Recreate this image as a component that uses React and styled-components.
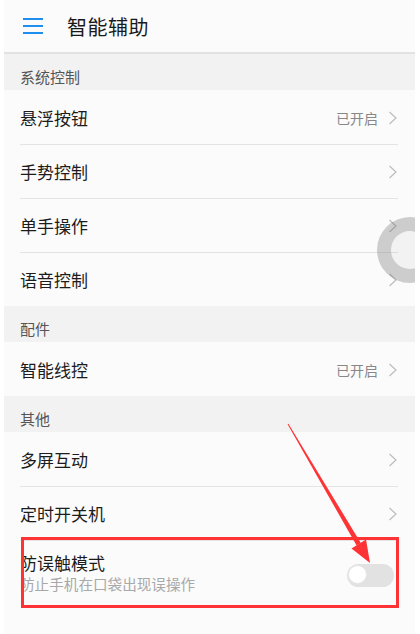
import React from "react";
import styled, { createGlobalStyle } from "styled-components";

const GlobalStyle = createGlobalStyle`
  html, body {
    margin: 0;
    padding: 0;
    background: #fff;
  }
  body {
    font-family: "Noto Sans CJK SC", "Noto Sans", sans-serif;
  }
`;

const Page = styled.div`
  position: relative;
  width: 420px;
  height: 634px;
  overflow: hidden;
  background: #fff;
`;

const Screen = styled.div`
  position: relative;
  margin-left: 4px;
  width: 411px;
  height: 634px;
  overflow: hidden;
  background: #fbfbfb;
`;

const Header = styled.header`
  display: flex;
  align-items: center;
  height: 52px;
  padding-left: 19px;
  background: #fbfbfb;
  border-bottom: 2px solid #e2e2e2;
`;

const MenuButton = styled.div`
  display: flex;
  flex-direction: column;
  justify-content: space-between;
  width: 20px;
  height: 16px;
  margin-right: 24px;

  span {
    display: block;
    height: 2px;
    background: #1f8ef1;
  }
`;

const Title = styled.h1`
  margin: 0;
  font-size: 20px;
  font-weight: 400;
  color: #1a1a1a;
  letter-spacing: 0.5px;
`;

const SectionLabel = styled.div`
  display: flex;
  align-items: center;
  box-sizing: border-box;
  height: 36px;
  padding: 8px 0 0 16px;
  background: #f2f2f2;
  font-size: 15px;
  color: #555;
`;

const Row = styled.div`
  padding: 0 17px 0 16px;
  background: #fbfbfb;
`;

const RowInner = styled.div`
  display: flex;
  align-items: center;
  height: ${(p) => (p.$tall ? "64px" : "53px")};
  border-top: 1px solid ${(p) => (p.$divided ? "#e4e4e4" : "transparent")};
`;

const RowText = styled.div`
  flex: 1;
  display: flex;
  flex-direction: column;
`;

const RowTitle = styled.div`
  font-size: 17px;
  color: #1c1c1c;
  line-height: 22px;
`;

const RowSub = styled.div`
  font-size: 14.6px;
  color: #a8a8a8;
  line-height: 20px;
`;

const Status = styled.span`
  font-size: 14px;
  color: #888;
  margin-right: 10px;
`;

const Chevron = () => (
  <svg width="10" height="14" viewBox="0 0 10 14">
    <path d="M1.5 1 L8 7 L1.5 13" fill="none" stroke="#bdbdbd" strokeWidth="1.2" />
  </svg>
);

const Toggle = styled.div`
  position: relative;
  width: 47px;
  height: 23px;
  margin-right: 4px;
  margin-top: 4px;
  border-radius: 12px;
  background: #e2e2e2;

  &::after {
    content: "";
    position: absolute;
    left: 1px;
    top: 1px;
    width: 19px;
    height: 19px;
    border-radius: 50%;
    background: #fff;
    border: 1px solid #e6e6e6;
    box-sizing: border-box;
  }
`;

// floating assist ball, half off the right edge
const FloatBall = styled.div`
  position: absolute;
  left: 373px;
  top: 217px;
  width: 66px;
  height: 66px;
  box-sizing: border-box;
  border-radius: 50%;
  border: 14px solid rgba(120, 120, 120, 0.3);
  background: rgba(0, 0, 0, 0.035);
`;

const Highlight = styled.div`
  position: absolute;
  left: 21px;
  top: 537px;
  width: 378px;
  height: 71px;
  box-sizing: border-box;
  border: 3px solid #fe3335;
`;

const Arrow = styled.svg`
  position: absolute;
  left: 0;
  top: 0;
  pointer-events: none;
`;

const SettingRow = ({ title, sub, status, divided, tall, toggle }) => (
  <Row>
    <RowInner $divided={divided} $tall={tall}>
      <RowText>
        <RowTitle>{title}</RowTitle>
        {sub && <RowSub>{sub}</RowSub>}
      </RowText>
      {status && <Status>{status}</Status>}
      {toggle ? <Toggle /> : <Chevron />}
    </RowInner>
  </Row>
);

export default function App() {
  return (
    <Page>
      <GlobalStyle />
      <Screen>
        <Header>
          <MenuButton>
            <span />
            <span />
            <span />
          </MenuButton>
          <Title>智能辅助</Title>
        </Header>

        <SectionLabel>系统控制</SectionLabel>
        <SettingRow title="悬浮按钮" status="已开启" />
        <SettingRow title="手势控制" divided />
        <SettingRow title="单手操作" divided />
        <SettingRow title="语音控制" divided />

        <SectionLabel>配件</SectionLabel>
        <SettingRow title="智能线控" status="已开启" />

        <SectionLabel>其他</SectionLabel>
        <SettingRow title="多屏互动" />
        <SettingRow title="定时开关机" divided />
        <SettingRow
          title="防误触模式"
          sub="防止手机在口袋出现误操作"
          divided
          tall
          toggle
        />

        <FloatBall />
      </Screen>

      <Highlight />
      <Arrow width="420" height="634" viewBox="0 0 420 634">
        <polygon
          points="287.6,424.3 288.4,423.7 360.8,542.9 356.6,545.5"
          fill="#fe3335"
        />
        <polygon points="370,563 351.5,548.5 366,539.5" fill="#fe3335" />
      </Arrow>
    </Page>
  );
}
